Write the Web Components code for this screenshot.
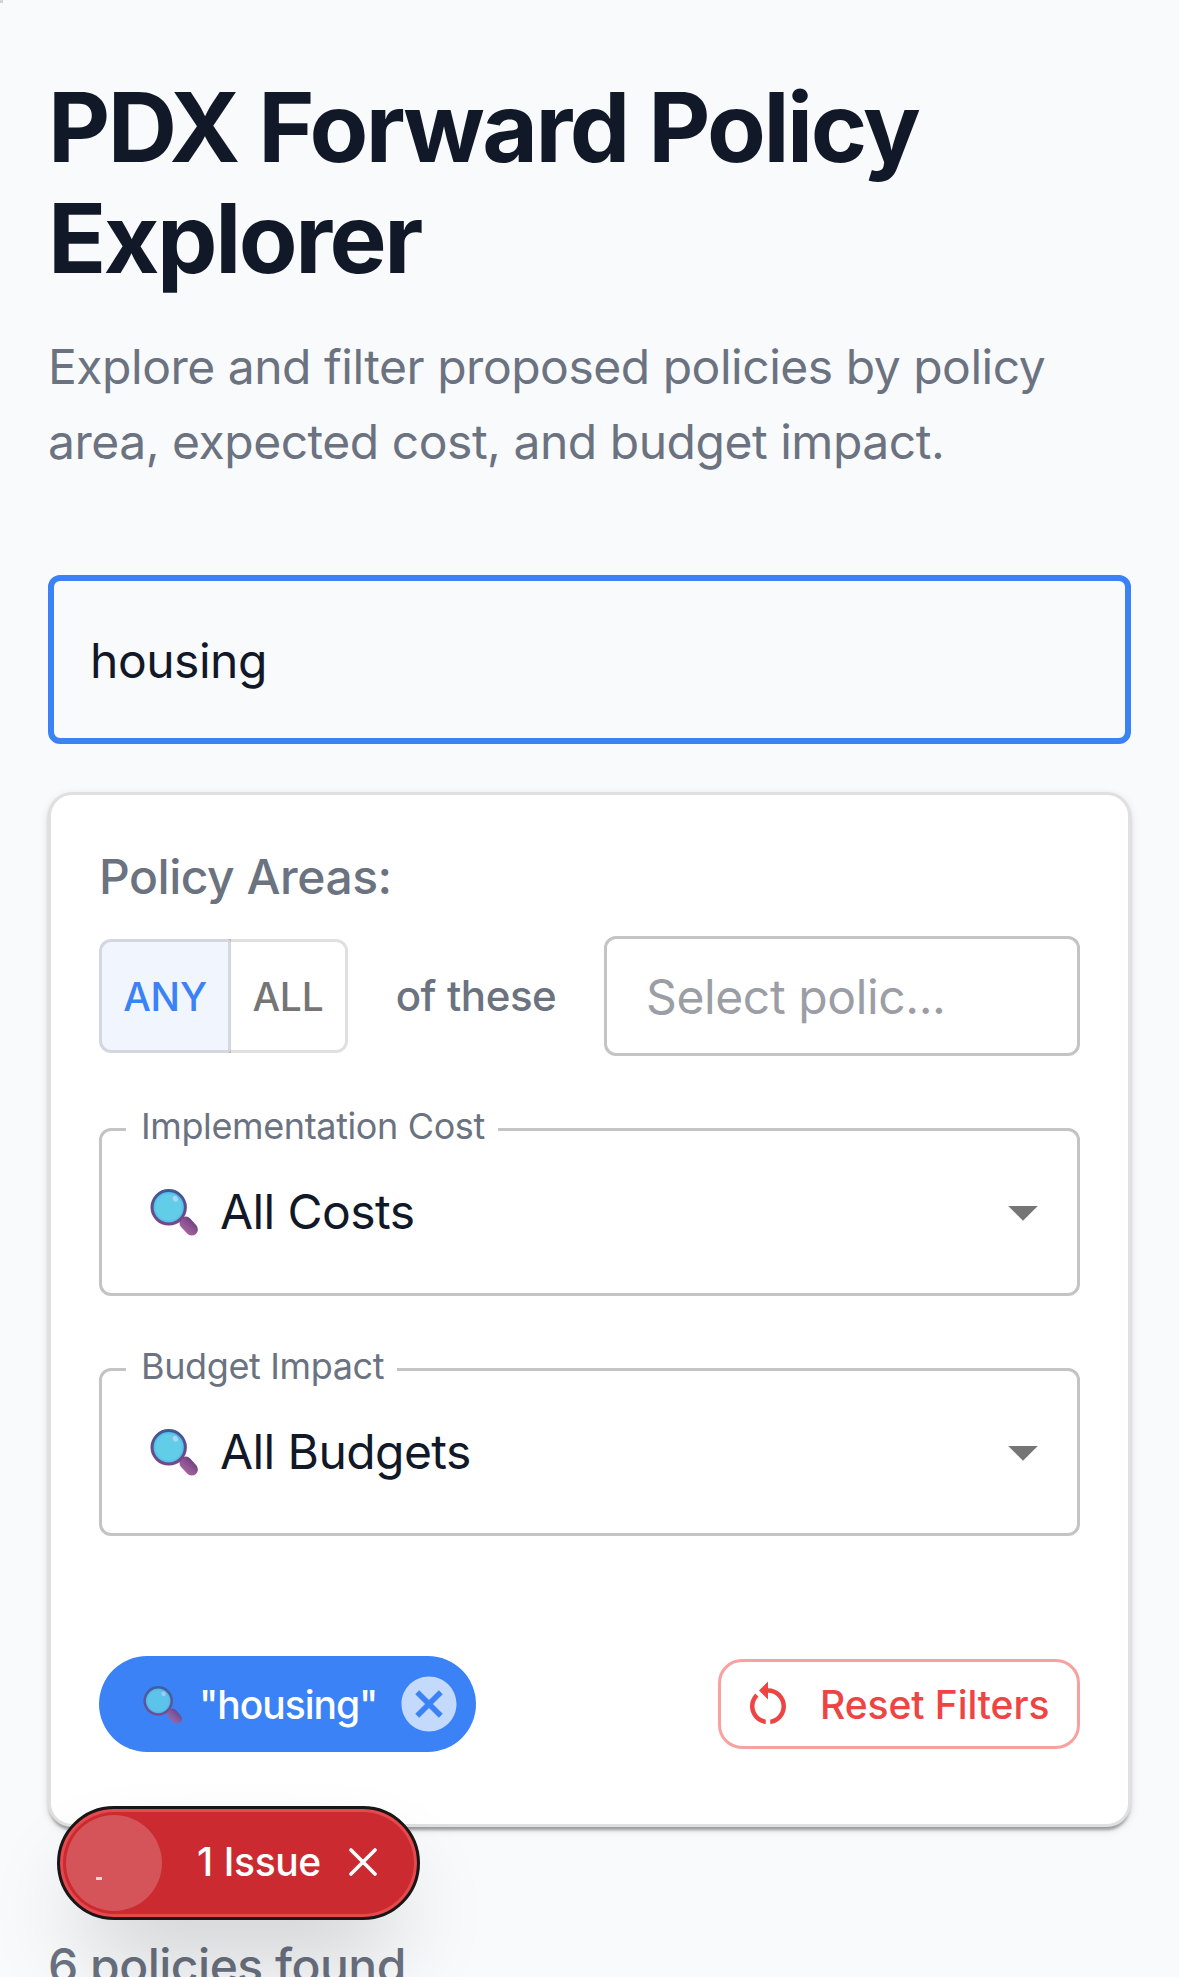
<!DOCTYPE html>
<html lang="en">
<head>
<meta charset="utf-8">
<title>PDX Forward Policy Explorer</title>
<style>
html,body{margin:0;height:1977px;overflow:hidden;background:#f9fafc}
body{font-family:Inter,"Liberation Sans",sans-serif;color:#111827;letter-spacing:-.01em}
</style>
</head>
<body>
<policy-explorer></policy-explorer>
<script>
const define = (name, html) => {
  const t = document.createElement('template');
  t.innerHTML = html;
  customElements.define(name, class extends HTMLElement {
    constructor() {
      super();
      this.attachShadow({mode: 'open'}).append(t.content.cloneNode(true));
    }
  });
};

define('page-heading', `
<style>
:host{display:block}
h1{margin:0;font-size:96px;line-height:111px;font-weight:700;letter-spacing:-.0255em}
p{margin:34.8px 0 0;font-size:48px;line-height:75px;letter-spacing:-.01em;color:#6b7280}
</style>
<h1><slot name="title"></slot></h1>
<p><slot></slot></p>`);

define('search-field', `
<style>
:host{display:flex;align-items:center;box-sizing:border-box;height:169px;border:6px solid #3b82f6;border-radius:12px;padding:2px 36px 0;font-size:48px;line-height:69px;letter-spacing:-.01em}
</style>
<span><slot></slot></span>`);

define('magnifier-icon', `
<style>
:host{display:block;width:48px;height:48px}
svg{display:block;width:100%;height:100%;overflow:visible}
</style>
<svg viewBox="0 0 48 48">
<defs>
<linearGradient id="rim" x1="0" y1="0" x2="0" y2="1"><stop offset="0" stop-color="#43598f"/><stop offset="1" stop-color="#7b4585"/></linearGradient>
<linearGradient id="grip" gradientUnits="userSpaceOnUse" x1="44" y1="32" x2="35" y2="42"><stop offset="0" stop-color="#6c3f78"/><stop offset=".5" stop-color="#8a5490"/><stop offset="1" stop-color="#a162a0"/></linearGradient>
<radialGradient id="glass"><stop offset=".75" stop-color="#62cde9"/><stop offset="1" stop-color="#41aeea"/></radialGradient>
</defs>
<path d="M35.6 33.8 41.7 40.4" stroke="url(#grip)" stroke-width="12.4" stroke-linecap="round"/>
<circle cx="18.7" cy="18.3" r="16.7" fill="url(#glass)" stroke="url(#rim)" stroke-width="3"/>
<ellipse cx="25.3" cy="9.7" rx="2.5" ry="3" fill="#b5d4f3" transform="rotate(-25 25.3 9.7)"/>
</svg>`);

define('filter-card', `
<style>
:host{display:flex;flex-direction:column;box-sizing:border-box;border:3px solid #e0e0e0;border-radius:24px;background:#fff;padding:48px 48px 72px;
box-shadow:0 6px 3px -3px rgba(0,0,0,.2),0 3px 3px rgba(0,0,0,.14),0 3px 9px rgba(0,0,0,.12)}
</style>
<slot></slot>`);

define('area-row', `
<style>
:host{display:block}
.label{font-size:48px;line-height:68px;font-weight:500;letter-spacing:-.01em;color:#6b7280;margin-bottom:25px}
.row{display:flex;align-items:center;height:120px}
.text{font-size:42px;font-weight:500;letter-spacing:-.01em;color:#6b7280;margin:0 auto;padding-top:1px;line-height:60px}
.pick{box-sizing:border-box;width:476px;height:120px;border:3px solid #c4c4c4;border-radius:12px;padding:1px 39px 0;display:flex;align-items:center;font-size:48px;letter-spacing:-.008em;color:#9b9ea4}
</style>
<div class="label">Policy Areas:</div>
<div class="row">
<match-toggle></match-toggle>
<span class="text">of these</span>
<div class="pick"><span>Select polic...</span></div>
</div>`);

define('match-toggle', `
<style>
:host{display:flex;height:114px;font-size:39px;font-weight:500;letter-spacing:-.005em;line-height:68px}
span{box-sizing:border-box;display:flex;align-items:center;justify-content:center;padding-top:3px;border:3px solid rgba(0,0,0,.12)}
.on{width:132px;border-radius:12px 0 0 12px;color:#3b82f6;background:rgba(59,130,246,.08)}
.off{width:120px;margin-left:-3px;border-left-color:transparent;border-radius:0 12px 12px 0;color:#757575}
</style>
<span class="on">ANY</span><span class="off">ALL</span>`);

define('select-box', `
<style>
:host{display:block;margin-top:72px;height:168px}
fieldset{margin:-17px 0 0;height:185px;box-sizing:border-box;border:3px solid #c4c4c4;border-radius:12px;padding:0 39px 0 48px;min-width:0}
legend{margin-left:-24px;padding:0 13px 0 15px;height:37px;line-height:30px;font-size:36px;letter-spacing:-.0105em;color:#6b7280}
.value{display:flex;align-items:center;height:147px;font-size:48px;letter-spacing:-.012em;margin-top:-9.5px}
.value span{flex:1;margin-left:22px}
magnifier-icon{margin-top:2px}
.arrow{width:30px;height:15px;margin-top:3px;background:#757575;clip-path:polygon(0 0,100% 0,50% 100%)}
</style>
<fieldset><legend><slot name="label"></slot></legend>
<div class="value"><magnifier-icon></magnifier-icon><span><slot></slot></span><i class="arrow"></i></div></fieldset>`);

define('filter-chip', `
<style>
:host{display:flex;align-items:center;box-sizing:border-box;width:377px;height:96px;border-radius:48px;background:#3b82f6;color:#fff;padding:0 14px 0 44px;font-size:39px;font-weight:500;letter-spacing:-.026em}
magnifier-icon{width:39px;height:39px;opacity:.87;margin-top:3px}
span{flex:1;margin-left:17px;padding-top:2px}
svg{width:66px;height:66px;fill:rgba(255,255,255,.7);display:block}
</style>
<magnifier-icon></magnifier-icon><span><slot></slot></span>
<svg viewBox="0 0 24 24"><path d="M12 2C6.47 2 2 6.47 2 12s4.47 10 10 10 10-4.47 10-10S17.53 2 12 2m5 13.59L15.59 17 12 13.41 8.41 17 7 15.59 10.59 12 7 8.41 8.41 7 12 10.59 15.59 7 17 8.41 13.41 12z"/></svg>`);

define('reset-button', `
<style>
:host{display:flex;align-items:center;box-sizing:border-box;width:362px;height:90px;border:3px solid rgba(239,68,68,.5);border-radius:24px;color:#ef4444;padding:0 20px;font-size:39px;font-weight:500;letter-spacing:-.002em;white-space:nowrap}
svg{width:54px;height:54px;fill:currentColor;margin-right:25px}
span{padding-top:2px}
</style>
<svg viewBox="0 0 24 24"><path d="M12 5V2L8 6l4 4V7c3.31 0 6 2.69 6 6 0 2.97-2.17 5.43-5 5.91v2.02c3.95-.49 7-3.85 7-7.93 0-4.42-3.58-8-8-8m-6 8c0-1.65.67-3.15 1.76-4.24L6.34 7.34C4.9 8.79 4 10.79 4 13c0 4.08 3.05 7.44 7 7.93v-2.02c-2.83-.48-5-2.94-5-5.91"/></svg>
<span><slot></slot></span>`);

define('active-filters', `
<style>:host{display:flex;justify-content:space-between;align-items:center;margin-top:120px}</style>
<slot></slot>`);

define('issue-badge', `
<style>
:host{position:absolute;left:57px;top:1806px;display:flex;align-items:center;box-sizing:border-box;width:363px;height:114px;border:3px solid #171717;border-radius:57px;background:#ca2a30;color:#fff;padding:0 40px 0 6px;
box-shadow:inset 0 0 0 3px #e5484d,0 48px 96px -24px rgba(0,0,0,.24)}
.mark{width:96px;height:96px;border-radius:50%;background:rgba(255,255,255,.2);position:relative}
.mark i{position:absolute;left:30px;top:62px;width:6px;height:3px;background:rgba(255,255,255,.75)}
.t{font-size:39px;font-weight:500;letter-spacing:-.01em;word-spacing:1px;margin:-4px 0 0 35px;flex:1;white-space:nowrap}
svg{width:28px;height:28px;margin-top:-2px;stroke:#fff;stroke-width:3.6;stroke-linecap:round}
</style>
<div class="mark"><i></i></div><span class="t"><slot></slot></span>
<svg viewBox="0 0 28 28"><path d="M2 2 26 26M26 2 2 26"/></svg>`);

define('policy-explorer', `
<style>
:host{display:block;position:relative;height:1977px;overflow:hidden}
main{display:flex;flex-direction:column;padding:72px 48px 0}
search-field{margin:96px 0 48px}
.count{margin-top:103px;font-size:48px;line-height:72px;font-weight:500;letter-spacing:-.0105em;color:#6b7280}
.dot{position:absolute;left:0;top:0;width:3px;height:3px;background:#d2d3d5}
</style>
<i class="dot"></i>
<main>
<page-heading><span slot="title">PDX Forward Policy<br>Explorer</span>Explore and filter proposed policies by policy<br>area, expected cost, and budget impact.</page-heading>
<search-field>housing</search-field>
<filter-card>
<area-row></area-row>
<select-box><span slot="label">Implementation Cost</span>All Costs</select-box>
<select-box><span slot="label">Budget Impact</span>All Budgets</select-box>
<active-filters><filter-chip>"housing"</filter-chip><reset-button>Reset Filters</reset-button></active-filters>
</filter-card>
<div class="count">6 policies found</div>
</main>
<issue-badge>1 Issue</issue-badge>`);
</script>
</body>
</html>
